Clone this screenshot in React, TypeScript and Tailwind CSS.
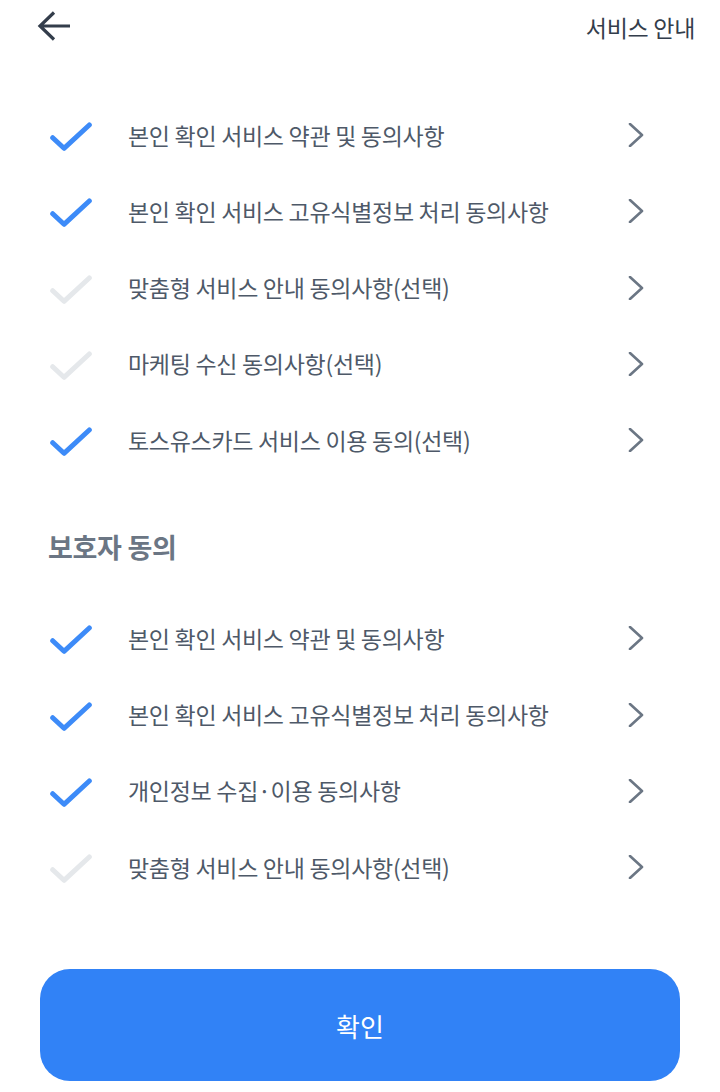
import React from "react";

const Check = ({ on }: { on: boolean }) => (
  <svg width="44" height="44" viewBox="0 0 44 44" className="shrink-0">
    <path
      d="M4.7 24.7 L16 35.3 L41.3 12"
      fill="none"
      stroke={on ? "#3d8bf8" : "#e5e8eb"}
      strokeWidth="5"
      strokeLinecap="round"
      strokeLinejoin="round"
    />
  </svg>
);

const Chevron = () => (
  <svg width="24" height="24" viewBox="0 0 24 24" className="shrink-0">
    <path
      d="M6 1 L18 12 L6 23"
      fill="none"
      stroke="#6b7684"
      strokeWidth="2.6"
      strokeLinecap="round"
      strokeLinejoin="round"
    />
  </svg>
);

const Row = ({ on, label }: { on: boolean; label: string }) => (
  <div className="flex h-[76.25px] items-center pl-[48px] pr-[72px]">
    <Check on={on} />
    <span className="ml-[36px] flex-1 text-[23px] leading-none tracking-[-0.3px] text-[#4e5968]">
      {label}
    </span>
    <Chevron />
  </div>
);

export default function App() {
  const group1 = [
    { on: true, label: "본인 확인 서비스 약관 및 동의사항" },
    { on: true, label: "본인 확인 서비스 고유식별정보 처리 동의사항" },
    { on: false, label: "맞춤형 서비스 안내 동의사항(선택)" },
    { on: false, label: "마케팅 수신 동의사항(선택)" },
    { on: true, label: "토스유스카드 서비스 이용 동의(선택)" },
  ];
  const group2 = [
    { on: true, label: "본인 확인 서비스 약관 및 동의사항" },
    { on: true, label: "본인 확인 서비스 고유식별정보 처리 동의사항" },
    { on: true, label: "개인정보 수집·이용 동의사항" },
    { on: false, label: "맞춤형 서비스 안내 동의사항(선택)" },
  ];
  return (
    <div
      className="flex h-[1092px] w-[720px] flex-col overflow-hidden bg-white"
      style={{ fontFamily: '"Noto Sans CJK KR", "Noto Sans", sans-serif' }}
    >
      <div className="flex h-[54px] items-center justify-between pl-[36px] pr-[25px]">
        <svg width="36" height="36" viewBox="0 0 36 36">
          <path
            d="M4 17 L34 17 M18 3.5 L4 17 L18 30.5"
            fill="none"
            stroke="#333d4b"
            strokeWidth="3.2"
            strokeLinecap="butt"
            strokeLinejoin="miter"
          />
        </svg>
        <span className="text-[23px] leading-none tracking-[-0.3px] text-[#333d4b]">서비스 안내</span>
      </div>
      <div className="mt-[43px] flex flex-col">
        {group1.map((r, i) => (
          <Row key={i} {...r} />
        ))}
      </div>
      <div className="mt-[51px] h-[36px] pl-[48px] text-[27px] font-bold leading-[36px] tracking-[-0.3px] text-[#6b7684]">
        보호자 동의
      </div>
      <div className="mt-[35px] flex flex-col">
        {group2.map((r, i) => (
          <Row key={i} {...r} />
        ))}
      </div>
      <div className="mt-[64px] px-[40px]">
        <button className="flex h-[112px] w-full items-center justify-center rounded-[30px] bg-[#3182f6] text-[26px] text-white">
          확인
        </button>
      </div>
    </div>
  );
}
